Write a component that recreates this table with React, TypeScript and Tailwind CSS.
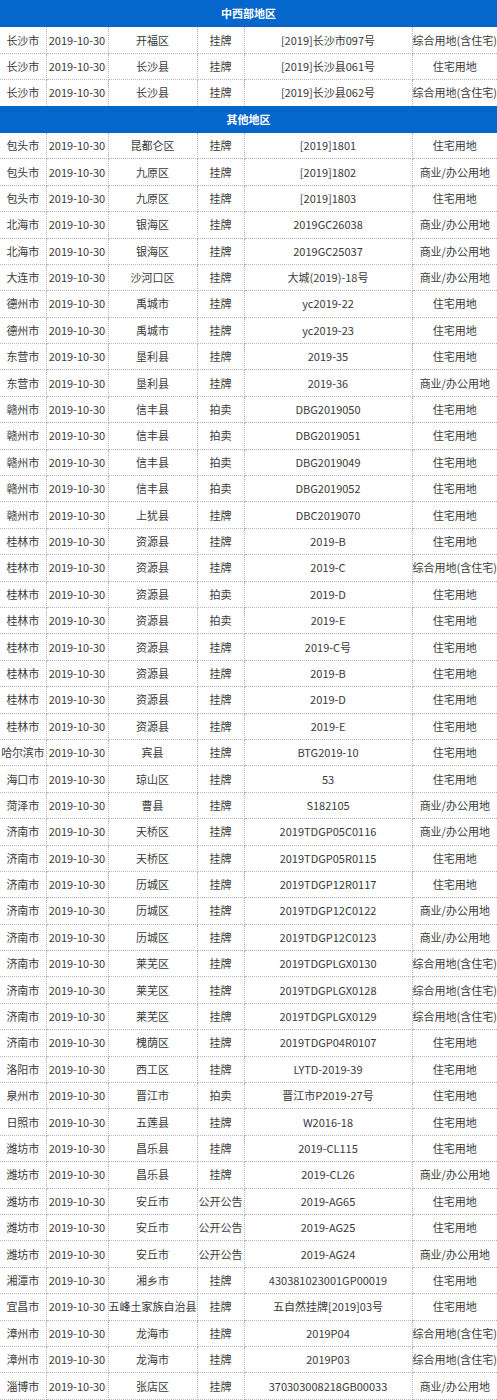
import React from "react";

type Row = [string, string, string, string, string, string];

const D = "2019-10-30";

const mid: Row[] = [
  ["长沙市", D, "开福区", "挂牌", "[2019]长沙市097号", "综合用地(含住宅)"],
  ["长沙市", D, "长沙县", "挂牌", "[2019]长沙县061号", "住宅用地"],
  ["长沙市", D, "长沙县", "挂牌", "[2019]长沙县062号", "综合用地(含住宅)"],
];

const other: Row[] = [
  ["包头市", D, "昆都仑区", "挂牌", "[2019]1801", "住宅用地"],
  ["包头市", D, "九原区", "挂牌", "[2019]1802", "商业/办公用地"],
  ["包头市", D, "九原区", "挂牌", "[2019]1803", "住宅用地"],
  ["北海市", D, "银海区", "挂牌", "2019GC26038", "商业/办公用地"],
  ["北海市", D, "银海区", "挂牌", "2019GC25037", "商业/办公用地"],
  ["大连市", D, "沙河口区", "挂牌", "大城(2019)-18号", "商业/办公用地"],
  ["德州市", D, "禹城市", "挂牌", "yc2019-22", "住宅用地"],
  ["德州市", D, "禹城市", "挂牌", "yc2019-23", "住宅用地"],
  ["东营市", D, "垦利县", "挂牌", "2019-35", "住宅用地"],
  ["东营市", D, "垦利县", "挂牌", "2019-36", "商业/办公用地"],
  ["赣州市", D, "信丰县", "拍卖", "DBG2019050", "住宅用地"],
  ["赣州市", D, "信丰县", "拍卖", "DBG2019051", "住宅用地"],
  ["赣州市", D, "信丰县", "拍卖", "DBG2019049", "住宅用地"],
  ["赣州市", D, "信丰县", "拍卖", "DBG2019052", "住宅用地"],
  ["赣州市", D, "上犹县", "挂牌", "DBC2019070", "住宅用地"],
  ["桂林市", D, "资源县", "挂牌", "2019-B", "住宅用地"],
  ["桂林市", D, "资源县", "挂牌", "2019-C", "综合用地(含住宅)"],
  ["桂林市", D, "资源县", "拍卖", "2019-D", "住宅用地"],
  ["桂林市", D, "资源县", "拍卖", "2019-E", "住宅用地"],
  ["桂林市", D, "资源县", "挂牌", "2019-C号", "住宅用地"],
  ["桂林市", D, "资源县", "挂牌", "2019-B", "住宅用地"],
  ["桂林市", D, "资源县", "挂牌", "2019-D", "住宅用地"],
  ["桂林市", D, "资源县", "挂牌", "2019-E", "住宅用地"],
  ["哈尔滨市", D, "宾县", "挂牌", "BTG2019-10", "住宅用地"],
  ["海口市", D, "琼山区", "挂牌", "53", "住宅用地"],
  ["菏泽市", D, "曹县", "挂牌", "S182105", "商业/办公用地"],
  ["济南市", D, "天桥区", "挂牌", "2019TDGP05C0116", "商业/办公用地"],
  ["济南市", D, "天桥区", "挂牌", "2019TDGP05R0115", "住宅用地"],
  ["济南市", D, "历城区", "挂牌", "2019TDGP12R0117", "住宅用地"],
  ["济南市", D, "历城区", "挂牌", "2019TDGP12C0122", "商业/办公用地"],
  ["济南市", D, "历城区", "挂牌", "2019TDGP12C0123", "商业/办公用地"],
  ["济南市", D, "莱芜区", "挂牌", "2019TDGPLGX0130", "综合用地(含住宅)"],
  ["济南市", D, "莱芜区", "挂牌", "2019TDGPLGX0128", "综合用地(含住宅)"],
  ["济南市", D, "莱芜区", "挂牌", "2019TDGPLGX0129", "综合用地(含住宅)"],
  ["济南市", D, "槐荫区", "挂牌", "2019TDGP04R0107", "住宅用地"],
  ["洛阳市", D, "西工区", "挂牌", "LYTD-2019-39", "住宅用地"],
  ["泉州市", D, "晋江市", "拍卖", "晋江市P2019-27号", "住宅用地"],
  ["日照市", D, "五莲县", "挂牌", "W2016-18", "住宅用地"],
  ["潍坊市", D, "昌乐县", "挂牌", "2019-CL115", "住宅用地"],
  ["潍坊市", D, "昌乐县", "挂牌", "2019-CL26", "商业/办公用地"],
  ["潍坊市", D, "安丘市", "公开公告", "2019-AG65", "住宅用地"],
  ["潍坊市", D, "安丘市", "公开公告", "2019-AG25", "住宅用地"],
  ["潍坊市", D, "安丘市", "公开公告", "2019-AG24", "商业/办公用地"],
  ["湘潭市", D, "湘乡市", "挂牌", "430381023001GP00019", "住宅用地"],
  ["宜昌市", D, "五峰土家族自治县", "挂牌", "五自然挂牌[2019]03号", "住宅用地"],
  ["漳州市", D, "龙海市", "挂牌", "2019P04", "综合用地(含住宅)"],
  ["漳州市", D, "龙海市", "挂牌", "2019P03", "综合用地(含住宅)"],
  ["淄博市", D, "张店区", "挂牌", "370303008218GB00033", "商业/办公用地"],
];

function Header({ title }: { title: string }) {
  return (
    <tr className="h-[26.4px]">
      <td colSpan={6} className="bg-[#0566cc] text-white font-bold text-[11px] text-center border-y border-[#0566cc] p-0">
        {title}
      </td>
    </tr>
  );
}

function DataRow({ r }: { r: Row }) {
  return (
    <tr className="h-[26.4px]">
      {r.map((c, i) => (
        <td
          key={i}
          className={
            "border-y border-dotted border-[#b4b4b4] text-center p-0 whitespace-nowrap overflow-hidden " +
            (i < 5 ? "border-r " : "") +
            (i === 0 ? "tracking-[-0.2px]" : "")
          }
        >
          {c}
        </td>
      ))}
    </tr>
  );
}

export default function App() {
  return (
    <div className="w-[497px] bg-white">
      <table
        className="w-[497px] table-fixed border-collapse text-[11px] leading-none text-[#3a3a3a]"
        style={{ fontFamily: '"Noto Sans CJK SC", "Noto Sans", sans-serif' }}
      >
        <colgroup>
          <col className="w-[46px]" />
          <col className="w-[62px]" />
          <col className="w-[89px]" />
          <col className="w-[47px]" />
          <col className="w-[168px]" />
          <col className="w-[85px]" />
        </colgroup>
        <tbody>
          <Header title="中西部地区" />
          {mid.map((r, i) => (
            <DataRow key={"m" + i} r={r} />
          ))}
          <Header title="其他地区" />
          {other.map((r, i) => (
            <DataRow key={"o" + i} r={r} />
          ))}
        </tbody>
      </table>
    </div>
  );
}
